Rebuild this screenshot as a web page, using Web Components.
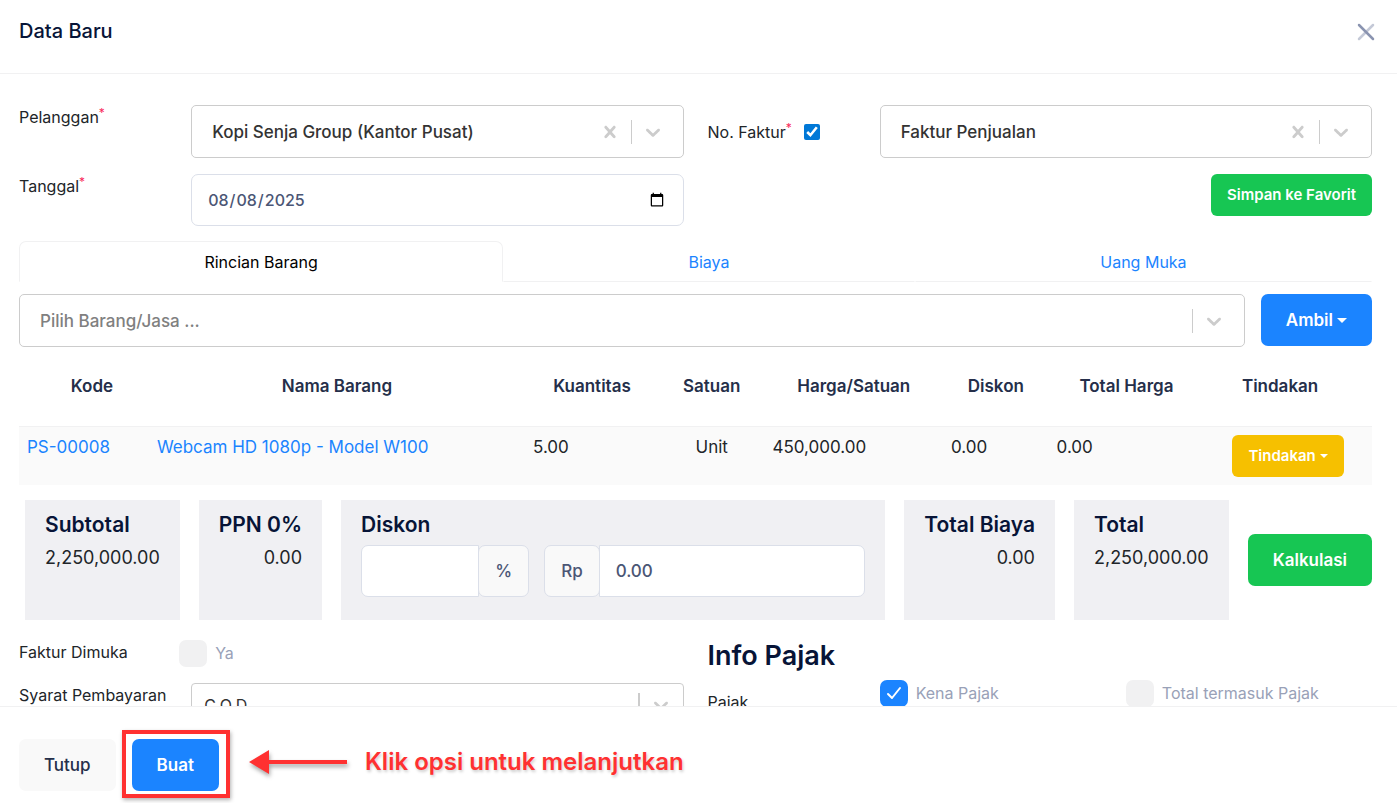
<!DOCTYPE html>
<html lang="id">
<head>
<meta charset="utf-8">
<meta name="viewport" content="width=device-width, initial-scale=1">
<title>Data Baru</title>
<style>
    body {
        margin: 0;
        font-family: Inter, "Liberation Sans", sans-serif;
        font-size: 16px;
        line-height: 24px;
        color: #212529;
        background: #fff;
        --heading: #071437;
        --muted: #99a1b7;
        --input-text: #4b5675;
        --line: #f1f1f2;
        --input-line: #dbdfe9;
        --primary: #1b84ff;
        --success: #17c653;
        --warning: #f6c000;
        --light: #f9f9f9;
        --callout: #ff3131;
    }
</style>
</head>
<body>
<form-modal heading="Data Baru">
    <form-columns>
        <form-stack>
            <select-field label="Pelanggan" required clearable value="Kopi Senja Group (Kantor Pusat)"></select-field>
            <date-field label="Tanggal" required value="2025-08-08"></date-field>
        </form-stack>
        <form-stack>
            <select-field label="No. Faktur" required clearable toggle value="Faktur Penjualan"></select-field>
            <ui-button variant="success" size="sm" class="end">Simpan ke Favorit</ui-button>
        </form-stack>
    </form-columns>

    <tab-bar tabs="Rincian Barang,Biaya,Uang Muka"></tab-bar>

    <item-picker>
        <select-box name="Pilih barang" placeholder="Pilih Barang/Jasa ..."></select-box>
        <ui-button slot="action" variant="primary" caret>Ambil</ui-button>
    </item-picker>

    <line-items></line-items>

    <summary-bar>
        <summary-card heading="Subtotal">2,250,000.00</summary-card>
        <summary-card heading="PPN 0%" align="right">0.00</summary-card>
        <discount-card heading="Diskon"></discount-card>
        <summary-card heading="Total Biaya" align="right">0.00</summary-card>
        <summary-card heading="Total">2,250,000.00</summary-card>
        <ui-button variant="success">Kalkulasi</ui-button>
    </summary-bar>

    <form-columns>
        <form-stack>
            <check-row label="Faktur Dimuka" options="Ya" inset></check-row>
            <select-field label="Syarat Pembayaran" compact value="C.O.D"></select-field>
        </form-stack>
        <form-stack dense>
            <section-title>Info Pajak</section-title>
            <check-row label="Pajak" options="Kena Pajak*,Total termasuk Pajak" lowered></check-row>
        </form-stack>
    </form-columns>

    <ui-button slot="footer" variant="light">Tutup</ui-button>
    <tour-callout slot="footer" text="Klik opsi untuk melanjutkan">
        <ui-button variant="primary">Buat</ui-button>
    </tour-callout>
</form-modal>

<script>
const CHEVRON = '<svg width="24" height="24" viewBox="0 0 20 20" aria-hidden="true"><path fill="currentColor" d="M4.516 7.548c0.436-0.446 1.043-0.481 1.576 0l3.908 3.747 3.908-3.747c0.533-0.481 1.141-0.446 1.574 0 0.436 0.445 0.408 1.197 0 1.615-0.406 0.418-4.695 4.502-4.695 4.502-0.217 0.223-0.502 0.335-0.787 0.335s-0.57-0.112-0.789-0.335c0 0-4.287-4.084-4.695-4.502s-0.436-1.17 0-1.615z"/></svg>';
const CROSS = '<svg width="24" height="24" viewBox="0 0 20 20" aria-hidden="true"><path fill="currentColor" d="M14.348 14.849c-0.469 0.469-1.229 0.469-1.697 0l-2.651-3.030-2.651 3.029c-0.469 0.469-1.229 0.469-1.697 0-0.469-0.469-0.469-1.229 0-1.697l2.758-3.15-2.759-3.152c-0.469-0.469-0.469-1.228 0-1.697s1.228-0.469 1.697 0l2.652 3.031 2.651-3.031c0.469-0.469 1.228-0.469 1.697 0s0.469 1.229 0 1.697l-2.758 3.152 2.758 3.15c0.469 0.469 0.469 1.229 0 1.698z"/></svg>';

// label column is one of four tracks, the control takes the other three
const FIELD_GRID = `
    *, *::before { box-sizing: border-box; }
    :host { display: block; }
    .field {
        display: grid;
        grid-template-columns: repeat(4, minmax(0, 1fr));
        column-gap: 24px;
        align-items: start;
    }
    .label { white-space: nowrap; }
    .label.middle { align-self: center; display: flex; align-items: center; }
    .control { grid-column: span 3; }
    sup { color: #f8285a; font-size: 12px; line-height: 0; vertical-align: super; }
`;

const SELECT_BOX = `
    .box {
        display: flex;
        align-items: center;
        gap: 3px;
        min-height: 53px;
        padding: 0 12px 0 20px;
        border: 1px solid #ccc;
        border-radius: 5px;
        background: #fff;
    }
    .box select {
        flex: 1;
        min-width: 0;
        height: 32px;
        padding: 0;
        border: 0;
        outline: 0;
        appearance: none;
        background: none;
        font: inherit;
        font-size: 17px;
        font-weight: 500;
        color: #333;
    }
    .box select.empty { color: #808080; }
    .box button, .box .arrow {
        display: flex;
        padding: 6px;
        border: 0;
        background: none;
        color: #ccc;
    }
    .box .bar { width: 1px; height: 24px; background: #ccc; }
    .box.compact { min-height: 44px; padding: 0 4px 0 12px; border-radius: 4px; }
    .box.compact select { font-size: 16px; font-weight: 400; }
    .box.compact .bar { width: 2px; }
`;

function selectBox({ id, value, placeholder, clearable, compact, name }) {
    return `
        <div class="box ${compact ? 'compact' : ''}">
            <select id="${id}" ${name ? `aria-label="${name}"` : ''} class="${value ? '' : 'empty'}">
                <option>${value || placeholder}</option>
            </select>
            ${clearable ? `<button type="button" aria-label="Hapus">${CROSS}</button>` : ''}
            <span class="bar"></span>
            <span class="arrow">${CHEVRON}</span>
        </div>
    `;
}

/**
 * Full screen modal: header, body that is cut by the footer, footer.
 *
 * @slot - Body content.
 * @slot footer - Footer buttons.
 */
class FormModal extends HTMLElement {
    constructor() {
        super();
        const shadow = this.attachShadow({ mode: 'open' });
        shadow.innerHTML = `
            <style>
            * { box-sizing: border-box; }
            :host {
                display: flex;
                flex-direction: column;
                height: 100vh;
                overflow: hidden;
            }
            header {
                display: flex;
                justify-content: space-between;
                align-items: flex-start;
                padding: 16px 15px 25px 19px;
                border-bottom: 1px solid var(--line);
            }
            h1 {
                margin: 0;
                font-size: 20px;
                line-height: 30px;
                font-weight: 500;
                color: var(--heading);
            }
            .close {
                display: flex;
                padding: 4px;
                border: 0;
                background: none;
            }
            main {
                flex: 1;
                min-height: 0;
                overflow: hidden;
                padding: 31px 25px 0 19px;
            }
            footer {
                display: flex;
                gap: 16px;
                padding: 32px 19px 12px;
                border-top: 1px solid var(--line);
                background: #fff;
            }
            </style>
            <header>
                <h1>${this.getAttribute('heading')}</h1>
                <button class="close" type="button" aria-label="Tutup jendela">
                    <svg width="24" height="24" viewBox="0 0 24 24" fill="none" stroke="#8a94b0" stroke-width="2.5" stroke-linecap="round">
                        <path d="M19 5 5 19" opacity=".5"/>
                        <path d="M5 5l14 14"/>
                    </svg>
                </button>
            </header>
            <main><slot></slot></main>
            <footer><slot name="footer"></slot></footer>
        `;
    }
}
customElements.define('form-modal', FormModal);

class FormColumns extends HTMLElement {
    constructor() {
        super();
        this.attachShadow({ mode: 'open' }).innerHTML = `
            <style>
            :host {
                display: grid;
                grid-template-columns: repeat(2, minmax(0, 1fr));
                column-gap: 24px;
            }
            </style>
            <slot></slot>
        `;
    }
}
customElements.define('form-columns', FormColumns);

class FormStack extends HTMLElement {
    constructor() {
        super();
        this.attachShadow({ mode: 'open' }).innerHTML = `
            <style>
            :host { display: flex; flex-direction: column; gap: 16px; }
            :host([dense]) { gap: 8px; }
            ::slotted(.end) { align-self: flex-end; }
            </style>
            <slot></slot>
        `;
    }
}
customElements.define('form-stack', FormStack);

class SectionTitle extends HTMLElement {
    constructor() {
        super();
        this.attachShadow({ mode: 'open' }).innerHTML = `
            <style>
            :host { display: block; }
            h2 {
                margin: 0;
                font-size: 27px;
                line-height: 32px;
                font-weight: 600;
                color: var(--heading);
            }
            </style>
            <h2><slot></slot></h2>
        `;
    }
}
customElements.define('section-title', SectionTitle);

/**
 * Button.
 *
 * @attr variant - primary, success, warning or light
 * @attr size - sm for the small one
 * @attr caret - adds the dropdown caret
 */
class UiButton extends HTMLElement {
    constructor() {
        super();
        this.attachShadow({ mode: 'open' }).innerHTML = `
            <style>
            :host { display: inline-flex; }
            button {
                display: inline-flex;
                align-items: center;
                justify-content: center;
                gap: 4px;
                width: 100%;
                padding: 14px 25px;
                border: 0;
                border-radius: 7px;
                font: inherit;
                font-size: 17px;
                font-weight: 600;
                color: #fff;
                background: var(--primary);
                white-space: nowrap;
                cursor: pointer;
            }
            :host([size="sm"]) button {
                padding: 9px 16px;
                font-size: 15px;
                border-radius: 6px;
            }
            :host([variant="success"]) button { background: var(--success); }
            :host([variant="warning"]) button { background: var(--warning); }
            :host([variant="light"]) button {
                background: var(--light);
                color: #252f4a;
                font-weight: 500;
            }
            .caret { display: none; }
            :host([caret]) .caret {
                display: block;
                border: 5px solid transparent;
                border-top-color: currentColor;
                border-bottom: 0;
            }
            :host([caret][size="sm"]) .caret { border-width: 4px 4px 0; }
            </style>
            <button type="button"><slot></slot><span class="caret"></span></button>
        `;
        if (!this.hasAttribute('caret')) this.shadowRoot.querySelector('.caret').remove();
    }
}
customElements.define('ui-button', UiButton);

class SelectBox extends HTMLElement {
    constructor() {
        super();
        this.attachShadow({ mode: 'open' }).innerHTML = `
            <style>
            * { box-sizing: border-box; }
            :host { display: block; }
            ${SELECT_BOX}
            </style>
            ${selectBox({
                id: 'input',
                name: this.getAttribute('name'),
                placeholder: this.getAttribute('placeholder'),
            })}
        `;
    }
}
customElements.define('select-box', SelectBox);

/**
 * Label and dropdown.
 *
 * @attr toggle - puts a tick box after the label
 * @attr compact - lower box with regular text
 */
class SelectField extends HTMLElement {
    constructor() {
        super();
        const toggle = this.hasAttribute('toggle');
        const star = this.hasAttribute('required') ? '<sup>*</sup>' : '';
        this.attachShadow({ mode: 'open' }).innerHTML = `
            <style>
            ${FIELD_GRID}
            ${SELECT_BOX}
            .tick { width: 16px; height: 16px; margin: 0 0 0 12px; accent-color: #0078d7; }
            </style>
            <div class="field">
                <div class="label ${toggle ? 'middle' : ''}">
                    <label for="input">${this.getAttribute('label')}${star}</label>
                    ${toggle ? '<input class="tick" type="checkbox" aria-label="Nomor otomatis" checked>' : ''}
                </div>
                <div class="control">
                    ${selectBox({
                        id: 'input',
                        value: this.getAttribute('value'),
                        clearable: this.hasAttribute('clearable'),
                        compact: this.hasAttribute('compact'),
                    })}
                </div>
            </div>
        `;
    }
}
customElements.define('select-field', SelectField);

class DateField extends HTMLElement {
    constructor() {
        super();
        this.attachShadow({ mode: 'open' }).innerHTML = `
            <style>
            ${FIELD_GRID}
            .control { display: flex; }
            input {
                width: 100%;
                height: 52px;
                padding: 0 16px 0 15px;
                border: 1px solid var(--input-line);
                border-radius: 7px;
                background: #fff;
                font: inherit;
                font-weight: 500;
                color: var(--input-text);
            }
            </style>
            <div class="field">
                <label class="label" for="input">${this.getAttribute('label')}<sup>*</sup></label>
                <div class="control"><input id="input" type="date" value="${this.getAttribute('value')}"></div>
            </div>
        `;
    }
}
customElements.define('date-field', DateField);

/**
 * Label with one or more tick boxes; a trailing * in options marks a ticked one.
 */
class CheckRow extends HTMLElement {
    constructor() {
        super();
        const options = this.getAttribute('options').split(',').map(option => {
            const checked = option.endsWith('*');
            return `<label><input type="checkbox" ${checked ? 'checked' : ''}>${option.replace('*', '')}</label>`;
        }).join('');
        this.attachShadow({ mode: 'open' }).innerHTML = `
            <style>
            ${FIELD_GRID}
            .control { display: grid; grid-template-columns: repeat(2, minmax(0, 1fr)); }
            :host([inset]) .control { margin-left: -12px; }
            :host([lowered]) .label { padding-top: 10px; }
            .control label {
                display: flex;
                align-items: center;
                gap: 8px;
                color: var(--muted);
            }
            input {
                appearance: none;
                width: 28px;
                height: 27px;
                margin: 0;
                border-radius: 7px;
                background: var(--line) center / 18px no-repeat;
            }
            input:checked {
                background-color: var(--primary);
                background-image: url("data:image/svg+xml,%3Csvg xmlns='http://www.w3.org/2000/svg' viewBox='0 0 18 18'%3E%3Cpath d='M3 10l4 4 8-10' fill='none' stroke='white' stroke-width='2' stroke-linecap='round' stroke-linejoin='round'/%3E%3C/svg%3E");
            }
            </style>
            <div class="field">
                <span class="label">${this.getAttribute('label')}</span>
                <div class="control">${options}</div>
            </div>
        `;
    }
}
customElements.define('check-row', CheckRow);

class TabBar extends HTMLElement {
    constructor() {
        super();
        const tabs = this.getAttribute('tabs').split(',').map((tab, i) =>
            `<a href="#" role="tab" aria-selected="${i === 0}">${tab}</a>`
        ).join('');
        this.attachShadow({ mode: 'open' }).innerHTML = `
            <style>
            :host { display: block; margin: 15px 0 12px; }
            nav { display: flex; }
            a {
                flex: 1 1 auto;
                padding: 8px 16px 7px;
                border: 1px solid transparent;
                border-bottom-color: var(--line);
                text-align: center;
                text-decoration: none;
                color: var(--primary);
            }
            a[aria-selected="true"] {
                border-color: var(--line);
                border-bottom-color: transparent;
                border-radius: 7px 7px 0 0;
                color: #000;
            }
            </style>
            <nav role="tablist">${tabs}</nav>
        `;
    }
}
customElements.define('tab-bar', TabBar);

class ItemPicker extends HTMLElement {
    constructor() {
        super();
        this.attachShadow({ mode: 'open' }).innerHTML = `
            <style>
            :host { display: flex; align-items: flex-start; gap: 16px; }
            ::slotted(select-box) { flex: 1; }
            </style>
            <slot></slot>
            <slot name="action"></slot>
        `;
    }
}
customElements.define('item-picker', ItemPicker);

class LineItems extends HTMLElement {
    constructor() {
        super();
        this.attachShadow({ mode: 'open' }).innerHTML = `
            <style>
            * { box-sizing: border-box; }
            :host { display: block; }
            table { width: 100%; table-layout: fixed; border-collapse: collapse; font-size: 17px; }
            th {
                height: 79px;
                padding: 0 8px;
                font-weight: 600;
                color: #252f4a;
            }
            th:first-child { padding-left: 24px; }
            th:last-child { padding-right: 24px; }
            tbody tr { border-top: 1px solid var(--line); background: #fafafa; }
            td { padding: 8px; vertical-align: top; }
            td.center { text-align: center; }
            td ui-button { vertical-align: top; }
            a { color: var(--primary); text-decoration: none; }
            </style>
            <table>
                <colgroup>
                    <col style="width: 9.6%"><col style="width: 27.8%"><col style="width: 9.9%"><col style="width: 7.8%">
                    <col style="width: 13.2%"><col style="width: 7.8%"><col style="width: 11.5%"><col style="width: 12.4%">
                </colgroup>
                <thead>
                    <tr>
                        <th>Kode</th>
                        <th>Nama Barang</th>
                        <th>Kuantitas</th>
                        <th>Satuan</th>
                        <th>Harga/Satuan</th>
                        <th>Diskon</th>
                        <th>Total Harga</th>
                        <th>Tindakan</th>
                    </tr>
                </thead>
                <tbody>
                    <tr>
                        <td><a href="#">PS-00008</a></td>
                        <td><a href="#">Webcam HD 1080p - Model W100</a></td>
                        <td>5.00</td>
                        <td class="center">Unit</td>
                        <td>450,000.00</td>
                        <td>0.00</td>
                        <td>0.00</td>
                        <td class="center"><ui-button variant="warning" size="sm" caret>Tindakan</ui-button></td>
                    </tr>
                </tbody>
            </table>
        `;
    }
}
customElements.define('line-items', LineItems);

class SummaryBar extends HTMLElement {
    constructor() {
        super();
        this.attachShadow({ mode: 'open' }).innerHTML = `
            <style>
            :host { display: flex; gap: 19px; margin: 15px 0 20px 6px; }
            ::slotted(discount-card) { flex: 1 1 0; min-width: 0; }
            ::slotted(ui-button) { align-self: center; }
            </style>
            <slot></slot>
        `;
    }
}
customElements.define('summary-bar', SummaryBar);

const CARD = `
    * { box-sizing: border-box; }
    :host {
        display: block;
        box-sizing: border-box;
        min-height: 120px;
        padding: 10px 20px;
        background: #f0f0f3;
    }
    :host([align="right"]) { text-align: right; }
    h3 {
        margin: 0 0 6px;
        font-size: 21px;
        line-height: 29px;
        font-weight: 600;
        color: var(--heading);
        white-space: nowrap;
    }
    .value { font-size: 18px; line-height: 26px; }
`;

class SummaryCard extends HTMLElement {
    constructor() {
        super();
        this.attachShadow({ mode: 'open' }).innerHTML = `
            <style>${CARD}</style>
            <h3>${this.getAttribute('heading')}</h3>
            <div class="value"><slot></slot></div>
        `;
    }
}
customElements.define('summary-card', SummaryCard);

class DiscountCard extends HTMLElement {
    constructor() {
        super();
        this.attachShadow({ mode: 'open' }).innerHTML = `
            <style>
            ${CARD}
            .groups { display: grid; grid-template-columns: minmax(0, 1fr) minmax(0, 2fr); }
            .group { display: flex; height: 52px; }
            .group + .group { margin-left: 15px; }
            input, label {
                border: 1px solid var(--input-line);
                font: inherit;
                font-size: 17px;
                font-weight: 500;
                color: var(--input-text);
            }
            input {
                flex: 1;
                min-width: 0;
                padding: 0 16px;
                background: #fff;
            }
            label {
                display: flex;
                align-items: center;
                padding: 0 16px;
                border-radius: 7px;
                background: var(--light);
            }
            input:first-child { border-radius: 7px 0 0 7px; }
            input:last-child { border-radius: 0 7px 7px 0; }
            .group > :last-child { margin-left: -1px; }
            </style>
            <h3>${this.getAttribute('heading')}</h3>
            <div class="groups">
                <div class="group"><input id="percent" type="text"><label for="percent">%</label></div>
                <div class="group"><label for="amount">Rp</label><input id="amount" type="text" value="0.00"></div>
            </div>
        `;
    }
}
customElements.define('discount-card', DiscountCard);

/**
 * Frames the slotted control and points an arrow with a text at it.
 */
class TourCallout extends HTMLElement {
    constructor() {
        super();
        this.attachShadow({ mode: 'open' }).innerHTML = `
            <style>
            :host { display: block; position: relative; }
            .frame {
                position: absolute;
                inset: -9px -11px -7px -10px;
                border: 4px solid var(--callout);
                box-shadow: 1px 2px 4px rgba(0, 0, 0, .3);
                pointer-events: none;
            }
            .note {
                position: absolute;
                left: calc(100% + 30px);
                top: 5px;
                display: flex;
                align-items: center;
                gap: 18px;
                font-size: 24px;
                line-height: 36px;
                font-weight: 600;
                color: var(--callout);
                white-space: nowrap;
                text-shadow: 1px 2px 3px rgba(0, 0, 0, .2);
            }
            svg { overflow: visible; filter: drop-shadow(1px 3px 2px rgba(0, 0, 0, .35)); }
            </style>
            <slot></slot>
            <span class="frame"></span>
            <div class="note">
                <svg width="98" height="24" viewBox="0 0 98 24" fill="currentColor" aria-hidden="true">
                    <path d="M0 12 20 0v10h78v4H20v10z"/>
                </svg>
                <span>${this.getAttribute('text')}</span>
            </div>
        `;
    }
}
customElements.define('tour-callout', TourCallout);
</script>
</body>
</html>
